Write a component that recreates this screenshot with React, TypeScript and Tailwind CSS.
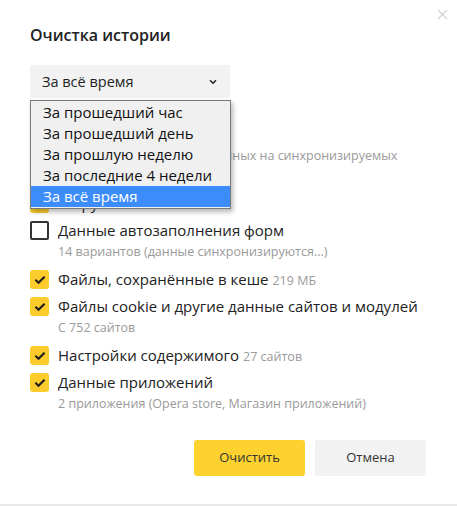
import React from "react";

const Check = ({ checked }: { checked: boolean }) =>
  checked ? (
    <div className="w-[19px] h-[19px] shrink-0 rounded-[3px] bg-[#fccb2c] flex items-center justify-center">
      <svg width="12" height="10" viewBox="0 0 12 10" fill="none">
        <path d="M1.4 4.8 L4.5 7.8 L10.6 1.7" stroke="#1f1f1f" strokeWidth="2.2" />
      </svg>
    </div>
  ) : (
    <div className="w-[19px] h-[19px] shrink-0 rounded-[2px] border-2 border-[#333]" />
  );

const Row = ({
  checked,
  title,
  extra,
  sub,
}: {
  checked: boolean;
  title: string;
  extra?: string;
  sub?: string;
}) => (
  <div className="flex items-start">
    <div className="pt-[1px]">
      <Check checked={checked} />
    </div>
    <div className="ml-[9px] flex flex-col">
      <div className="h-[20px] flex items-baseline gap-[4px] text-[15px] leading-[20px] text-[#222]">
        <span>{title}</span>
        {extra && <span className="text-[12.5px] leading-[20px] text-[#9a9a9a]">{extra}</span>}
      </div>
      {sub && <div className="text-[12.5px] leading-[20px] text-[#9a9a9a] mt-[2px]">{sub}</div>}
    </div>
  </div>
);

export default function App() {
  const options = [
    "За прошедший час",
    "За прошедший день",
    "За прошлую неделю",
    "За последние 4 недели",
    "За всё время",
  ];
  return (
    <div
      className="relative w-[457px] h-[506px] bg-white border-b-2 border-[#e8e8e8] overflow-hidden"
      style={{ fontFamily: '"Open Sans", "Noto Sans", sans-serif' }}
    >
      <div className="absolute right-[9px] top-[9px]">
        <svg width="11" height="11" viewBox="0 0 11 11">
          <path d="M1 1 L10 10 M10 1 L1 10" stroke="#d4d4d4" strokeWidth="1.3" />
        </svg>
      </div>

      <div className="px-[30px] pt-[24px]">
        <h2 className="text-[16px] leading-[22px] font-semibold text-[#222]">Очистка истории</h2>

        <div className="relative mt-[19px] w-[200px]">
          <div className="h-[33px] bg-[#f2f2f2] rounded-[2px] flex items-center justify-between pl-[12px] pr-[13px] text-[14.5px] text-[#222]">
            <span>За всё время</span>
            <svg width="8" height="6" viewBox="0 0 8 6">
              <path d="M1 1.2 L4 4.2 L7 1.2" stroke="#222" strokeWidth="1.6" fill="none" />
            </svg>
          </div>
          <div className="absolute left-0 top-[35px] w-[201px] z-10 bg-[#f0f0f0] border border-[#7a7a7a] shadow-[2px_3px_5px_rgba(0,0,0,0.28)] pt-[1px] pb-[1px]">
            {options.map((o, i) => (
              <div
                key={o}
                className={
                  i === 4
                    ? "h-[21px] leading-[21px] pl-[12px] text-[15px] bg-[#3c8dfb] text-white"
                    : "h-[21px] leading-[21px] pl-[12px] text-[15px] text-[#111]"
                }
              >
                {o}
              </div>
            ))}
          </div>
        </div>

        <div className="mt-[26px] flex flex-col gap-[7px]">
          <Row
            checked
            title="Просмотры"
            sub="1 326 адресов (без учёта данных на синхронизируемых устройствах)"
          />
          <Row checked title="Загрузки" />
          <Row
            checked={false}
            title="Данные автозаполнения форм"
            sub="14 вариантов (данные синхронизируются...)"
          />
          <Row checked title="Файлы, сохранённые в кеше" extra="219 МБ" />
          <Row
            checked
            title="Файлы cookie и другие данные сайтов и модулей"
            sub="С 752 сайтов"
          />
          <Row checked title="Настройки содержимого" extra="27 сайтов" />
          <Row
            checked
            title="Данные приложений"
            sub="2 приложения (Opera store, Магазин приложений)"
          />
        </div>

        <div className="mt-[26px] flex justify-end gap-[10px] pr-[1px]">
          <button className="w-[111px] h-[36px] rounded-[3px] bg-[#fdd22f] text-[13px] text-[#333]">
            Очистить
          </button>
          <button className="w-[111px] h-[36px] rounded-[3px] bg-[#f2f2f2] text-[13px] text-[#333]">
            Отмена
          </button>
        </div>
      </div>
    </div>
  );
}
